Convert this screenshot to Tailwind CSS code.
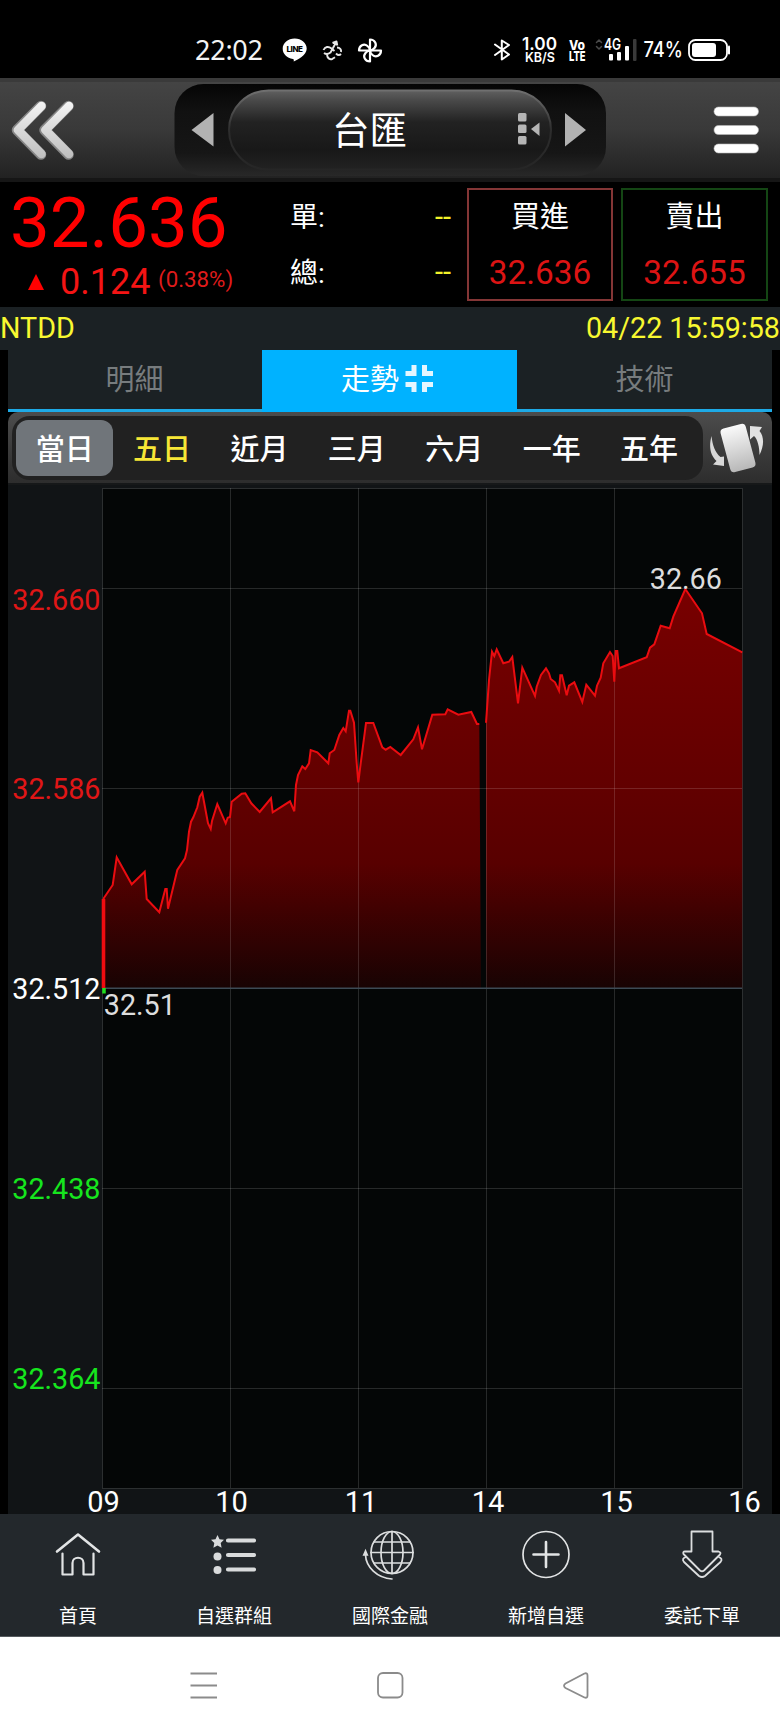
<!DOCTYPE html>
<html lang="zh-Hant">
<head>
<meta charset="utf-8">
<meta name="viewport" content="width=device-width, initial-scale=1">
<title>台匯</title>
<script src="https://cdn.jsdelivr.net/npm/@tailwindcss/browser@4"></script>
</head>
<body class="w-[780px] h-[1733px] bg-black overflow-hidden flex flex-col font-['Roboto','Noto_Sans_CJK_TC',sans-serif] text-white">

<!-- Status bar -->
<div class="h-[78px] shrink-0 bg-black">
<svg class="block" width="780" height="78" viewBox="0 0 780 78" fill="none" stroke-linecap="round" stroke-linejoin="round">
  <text x="195" y="59.500" font-family="Noto Sans" font-size="27" textLength="68" fill="#f4f4f4">22:02</text>
  <path d="M294.700 38.500c-6.700 0-12 4.500-12 10.200 0 5.200 4.400 9.500 10.200 10.200 1.200.2.900 1.300.8 2.600 3.500-1.600 13-6.500 13-12.800 0-5.700-5.300-10.200-12-10.200z" fill="#fff"/>
  <text x="286.500" y="52" font-family="Inter" font-weight="800" font-size="8" textLength="16.500" fill="#000">LINE</text>
  <g stroke="#e8e8e8" stroke-width="1.900" stroke-linecap="butt">
    <path d="M323.500 50c1.500-3.500 5-4 8-1.500l3 2.500M324 53c2 1.500 4.500 1 6.500-.5l5.500-10M332.500 43l4-1.500.8 4M337 47.500c3 0 4.500 2 4 4.500M341 54c-1.500 1.500-3.500 1-5-.5M327 55c.5 3.500 3 5 5.500 3.800l2.500-1.600"/>
  </g>
  <g stroke="#fff" stroke-width="2.200">
    <path d="M370 50.500V39.500c5 0 7.500 5 4.500 8.500-1.200 1.500-2.500 2.500-4.500 2.500z"/>
    <path d="M370 50.500V39.500c5 0 7.500 5 4.500 8.500-1.200 1.500-2.500 2.500-4.500 2.500z" transform="rotate(90 370 50.500)"/>
    <path d="M370 50.500V39.500c5 0 7.500 5 4.500 8.500-1.200 1.500-2.500 2.500-4.500 2.500z" transform="rotate(180 370 50.500)"/>
    <path d="M370 50.500V39.500c5 0 7.500 5 4.500 8.500-1.200 1.500-2.500 2.500-4.500 2.500z" transform="rotate(270 370 50.500)"/>
  </g>
  <path d="M495 44.500l14 10-7.200 5V40.500l7.200 4.500-14 10" stroke="#fff" stroke-width="2"/>
  <g fill="#fff" font-family="Inter">
    <text x="522" y="50" font-size="17.500" font-weight="600" textLength="35" lengthAdjust="spacingAndGlyphs">1.00</text>
    <text x="525" y="62" font-size="13.500" font-weight="600" textLength="30" lengthAdjust="spacingAndGlyphs">KB/S</text>
    <text x="569" y="49.500" font-size="13.500" font-weight="800" textLength="16" lengthAdjust="spacingAndGlyphs">Vo</text>
    <text x="569" y="61" font-size="13.500" font-weight="800" textLength="16.500" lengthAdjust="spacingAndGlyphs">LTE</text>
    <text x="604" y="50" font-size="15.500" font-weight="600" textLength="17" lengthAdjust="spacingAndGlyphs">4G</text>
    <text x="643.500" y="56.500" font-size="21" font-weight="500" textLength="39.500" lengthAdjust="spacingAndGlyphs">74%</text>
    <rect x="609" y="54" width="4" height="6.500" rx="1"/><rect x="617" y="52" width="4" height="8.500" rx="1"/><rect x="625" y="46" width="4" height="14.500" rx="1"/>
  </g>
  <rect x="633" y="39" width="3.500" height="22" rx="1" fill="#3a3a3a"/>
  <path d="M596.500 42.500l2.500-2.500 2.500 2.500M596.500 46.500l2.500 2.500 2.500-2.500" stroke="#4a4a4a" stroke-width="1.500"/>
  <rect x="689" y="40" width="38" height="20" rx="6.500" stroke="#fff" stroke-width="1.800"/>
  <rect x="692" y="43" width="24" height="14" rx="3" fill="#fff"/>
  <path d="M729 46.500v7" stroke="#fff" stroke-width="2"/>
</svg>
</div>

<!-- Title bar -->
<header class="h-[104px] shrink-0 bg-linear-to-b from-[#444444] via-[#393939] to-[#222222] border-t-4 border-t-[#3a3a3a] border-b-4 border-b-[#161616]">
<svg class="block -mt-1" width="780" height="104" viewBox="0 78 780 104">
  <defs>
    <linearGradient id="metal" x1="0" y1="0" x2="0" y2="1"><stop offset="0" stop-color="#fafafa"/><stop offset="1" stop-color="#b8b8b8"/></linearGradient>
    <linearGradient id="chev" gradientUnits="userSpaceOnUse" x1="0" y1="100" x2="0" y2="160"><stop offset="0" stop-color="#f6f6f6"/><stop offset="1" stop-color="#bcbcbc"/></linearGradient>
    <linearGradient id="well" x1="0" y1="0" x2="0" y2="1"><stop offset="0" stop-color="#050505"/><stop offset=".3" stop-color="#111"/><stop offset=".75" stop-color="#161616"/><stop offset="1" stop-color="#282828"/></linearGradient>
    <linearGradient id="pill" x1="0" y1="0" x2="0" y2="1"><stop offset="0" stop-color="#606060"/><stop offset=".12" stop-color="#4a4a4a"/><stop offset=".4" stop-color="#222"/><stop offset=".75" stop-color="#181818"/><stop offset="1" stop-color="#222"/></linearGradient>
    <linearGradient id="rim" x1="0" y1="0" x2="0" y2="1"><stop offset="0" stop-color="#707070"/><stop offset=".5" stop-color="#2d2d2d"/><stop offset="1" stop-color="#262626"/></linearGradient>
  </defs>
  <g fill="none" stroke-linecap="round" stroke-linejoin="round">
    <path d="M41 106L17 130 41 154.500M68.500 106L44.500 130 68.500 154.500" stroke="#858585" stroke-width="10.500"/>
    <path d="M41.500 106L18 130 41.500 154M69 106L45.500 130 69 154" stroke="url(#chev)" stroke-width="8.500"/>
  </g>
  <rect x="174.500" y="84" width="431.500" height="92" rx="29" fill="url(#well)"/>
  <path d="M191.500 130L213.500 113v33.500zM586 130l-21-17v33.500z" fill="#b2b2b2"/>
  <rect x="229" y="90.500" width="322" height="79" rx="39.500" fill="url(#pill)" stroke="url(#rim)" stroke-width="2"/>
  <text x="332" y="144" font-family="Noto Sans CJK TC" font-size="37.500" fill="#fff">台匯</text>
  <g fill="#b5b5b5"><rect x="518" y="113" width="8.500" height="8.500" rx="1.500"/><rect x="518" y="124.500" width="8.500" height="8.500" rx="1.500"/><rect x="518" y="136" width="8.500" height="8.500" rx="1.500"/><path d="M531 129l8.500-6.500v13.500z"/></g>
  <g fill="#fff" stroke="#bbb" stroke-width=".6"><rect x="714" y="107" width="44.500" height="9" rx="4.500"/><rect x="714" y="125.500" width="44.500" height="9" rx="4.500"/><rect x="714" y="144" width="44.500" height="9" rx="4.500"/></g>
</svg>
</header>

<!-- Quote summary -->
<section class="h-[125px] shrink-0 flex bg-black">
  <div class="w-[290px] flex flex-col text-[#ff0000]">
    <div class="pl-[10px] pt-[3px] h-[76px] text-[70.800px] leading-[76px] whitespace-nowrap">32.636</div>
    <div class="flex items-center h-[44px] pl-[28px] text-[#f41414] whitespace-nowrap">
      <svg class="mt-[3px] w-4 h-4 shrink-0" viewBox="0 0 16 16"><path d="M8 0l8 16H0z" fill="#ff0000"/></svg>
      <span class="ml-[16px] mt-[4px] w-[98px] text-[36px]">0.124</span>
      <span class="text-[22.300px] text-[#df1b1b]">(0.38%)</span>
    </div>
  </div>
  <div class="w-[163px] flex flex-col pt-[8px] text-[29px] leading-[56px]">
    <div class="flex justify-between"><span class="text-[28px]">單:</span><span class="text-[#f2f22a] pr-[2px] -mt-px">--</span></div>
    <div class="flex justify-between"><span class="text-[28px]">總:</span><span class="text-[#f2f22a] pr-[2px] -mt-[2px]">--</span></div>
  </div>
  <div class="flex gap-2 pt-[6px] pl-[14px]">
    <div class="w-[146px] h-[113px] border-2 border-[#843636] flex flex-col items-center text-[29px] leading-[55px]"><span>買進</span><span class="text-[33.300px] text-[#dc1414]">32.636</span></div>
    <div class="w-[147px] h-[113px] border-2 border-[#144614] flex flex-col items-center text-[29px] leading-[55px]"><span>賣出</span><span class="text-[33.300px] text-[#dc1414]">32.655</span></div>
  </div>
</section>

<!-- Source and timestamp -->
<div class="h-[43px] shrink-0 bg-[#1b2124] flex justify-between text-[#f8f830] text-[28.700px] leading-[42px] whitespace-nowrap">
  <span>NTDD</span><span>04/22 15:59:58</span>
</div>

<!-- View tabs -->
<nav class="mx-2 h-[62px] shrink-0 grid grid-cols-[254px_255px_255px] bg-[#1b2124] text-[#777c7e] text-[29px] leading-[61px] text-center border-b-[3px] border-[#1eaae6]">
  <span class="pr-px">明細</span>
  <span class="bg-[#00b2ff] text-white h-[62px] flex justify-center items-start gap-[6px] pr-[4px]">走勢<svg class="mt-[14px]" width="29" height="29" viewBox="0 0 29 29" fill="none" stroke="#e4f6ff" stroke-width="5"><path d="M9 1v8.500H.5M19.500 1v8.500H28M9 28v-7.500H.5M19.500 28v-7.500H28"/></svg></span>
  <span>技術</span>
</nav>

<!-- Time range -->
<div class="mx-2 h-[73px] shrink-0 rounded-t-[10px] bg-linear-to-b from-[#4c4c4c] to-[#2d2d2d] flex border-b-2 border-[#161819]">
  <div class="ml-[4px] mt-[4px] w-[691px] h-[64px] rounded-[18px] bg-[#212121] flex p-1 text-[29px] font-medium leading-[61px] text-center [&>span]:w-[97.400px]">
    <span class="rounded-[12px] bg-[#70757a] h-[56px]">當日</span>
    <span class="text-[#f7e636]">五日</span>
    <span>近月</span><span>三月</span><span>六月</span><span>一年</span><span>五年</span>
  </div>
  <svg class="ml-[7px] mt-[9px]" width="56" height="54" viewBox="710 421 56 54">
    <rect x="-13" y="-22.500" width="26" height="45" rx="4" transform="translate(738 448) rotate(-15)" fill="url(#metal)"/>
    <path d="M724 456.500v9.500l-11-1.500 3.500-3.500c-6-6-8-14-5-25 1 9 3.500 16.500 9 21z" fill="#d8d8d8"/>
    <path d="M750 426l12 1-2.500 4c5 6 4.500 15 0 24 0-8-2-16-5.500-19l-4 3.500z" fill="#e2e2e2"/>
  </svg>
</div>

<!-- Intraday chart -->
<main class="mx-2 h-[1029px] shrink-0">
<svg class="block overflow-visible" width="764" height="1029" viewBox="8 485 764 1029" font-family="Roboto" font-size="28.700">
  <defs>
    <linearGradient id="area" gradientUnits="userSpaceOnUse" x1="0" y1="588" x2="0" y2="988">
      <stop offset="0" stop-color="#780000"/><stop offset=".5" stop-color="#620000"/><stop offset=".69" stop-color="#580000"/><stop offset="1" stop-color="#180303"/>
    </linearGradient>
    <path id="am" d="M103.700 987.300V898.300L112.700 885 116.700 857.300 131.700 884.300 144.700 871.700 146.700 899 159.300 912.300 165.300 889 166.700 889 168 908.700 177.300 870 185 858.300 187 850 189 831.700 191 821.700 193.300 817.300 197.300 807.300 199.700 796.700 202.300 792.700 208 823.300 210.700 829 212 821 217.300 804 225.700 823.300 227.700 817.700 230 817 231.700 801.700 241.700 793.700 245.300 793.300 251.300 803.300 259.700 812 271 798.300 272.700 812.300 290 801.300 294.300 811.300 296 785 298 775 302.300 766.300 305.300 769 309 763.300 310.700 750 317.300 752.300 328.300 763.300 329.700 753.300 334.300 750 339.300 735 343.300 728 345.700 731.300 349 710.700 350.300 710.700 354 722.700 356.700 763.300 358.300 782.300 360.700 763.300 366 723 373.300 723 382.300 747.300 385.700 749.700 390.300 747 400.700 755 413.300 739.300 418 727.300 422 749.300 432.300 714.700 445.300 714.300 447.700 709.300 458.300 714.700 471.300 712 477 724 479.300 724"/>
    <path id="pm" d="M486 722.700L486.700 713.300 489 680 492 651.700 494.300 656 496.700 649.300 503.300 663.300 509 661.700 512.300 657 514.700 676.700 518 703.300 522.300 667.700 535 696 536.700 686.700 541 675 546 668.300 549 673.300 550.700 679 555 682.300 559 690.700 560.300 675.300 562 675.300 566.700 695.300 569 685.700 574.300 682.300 582.300 702 586.300 684.700 595 695.700 597 685.700 600.700 677.700 603.300 663.300 610 652 612.700 656 614.300 681.700 615.700 651 617.300 651 619 668.300 646.700 657.300 650 647.700 654.300 644.300 660.700 625.700 669.700 628.300 673.300 616.700 685.300 589 702 613.300 706.700 634 742.300 652.300"/>
  </defs>
  <rect x="8" y="485" width="764" height="1029" fill="#111416"/>
  <rect x="102.500" y="488.500" width="640" height="1000" fill="#040606"/>
  <path fill="url(#area)" d="M103.700 988V898.300L112.700 885 116.700 857.300 131.700 884.300 144.700 871.700 146.700 899 159.300 912.300 165.300 889 166.700 889 168 908.700 177.300 870 185 858.300 187 850 189 831.700 191 821.700 193.300 817.300 197.300 807.300 199.700 796.700 202.300 792.700 208 823.300 210.700 829 212 821 217.300 804 225.700 823.300 227.700 817.700 230 817 231.700 801.700 241.700 793.700 245.300 793.300 251.300 803.300 259.700 812 271 798.300 272.700 812.300 290 801.300 294.300 811.300 296 785 298 775 302.300 766.300 305.300 769 309 763.300 310.700 750 317.300 752.300 328.300 763.300 329.700 753.300 334.300 750 339.300 735 343.300 728 345.700 731.300 349 710.700 350.300 710.700 354 722.700 356.700 763.300 358.300 782.300 360.700 763.300 366 723 373.300 723 382.300 747.300 385.700 749.700 390.300 747 400.700 755 413.300 739.300 418 727.300 422 749.300 432.300 714.700 445.300 714.300 447.700 709.300 458.300 714.700 471.300 712 477 724 479.300 724 481 988z"/>
  <path fill="url(#area)" d="M486 988V722.700L486.700 713.300 489 680 492 651.700 494.300 656 496.700 649.300 503.300 663.300 509 661.700 512.300 657 514.700 676.700 518 703.300 522.300 667.700 535 696 536.700 686.700 541 675 546 668.300 549 673.300 550.700 679 555 682.300 559 690.700 560.300 675.300 562 675.300 566.700 695.300 569 685.700 574.300 682.300 582.300 702 586.300 684.700 595 695.700 597 685.700 600.700 677.700 603.300 663.300 610 652 612.700 656 614.300 681.700 615.700 651 617.300 651 619 668.300 646.700 657.300 650 647.700 654.300 644.300 660.700 625.700 669.700 628.300 673.300 616.700 685.300 589 702 613.300 706.700 634 742.300 652.300V988z"/>
  <g stroke="#ffffff" stroke-opacity=".14" fill="none">
    <path d="M102.500 488.500H742.500V1488.500H102.500zM230.500 488V1488M358.500 488V1488M486.500 488V1488M614.500 488V1488M102 588.500H742M102 788.500H742M102 1188.500H742M102 1388.500H742"/>
  </g>
  <path d="M102 988.300H742" stroke="#3d4a55" stroke-width="1.500"/>
  <use href="#am" fill="none" stroke="#ea0c10" stroke-width="2"/>
  <use href="#pm" fill="none" stroke="#ea0c10" stroke-width="2"/>
  <path d="M103.500 899V988" stroke="#f00c10" stroke-width="3.600"/>
  <path d="M104 988v5.500" stroke="#20e020" stroke-width="3.500"/>
  <g text-anchor="end">
    <text x="100.500" y="609.500" fill="#e01616">32.660</text>
    <text x="100.500" y="798.500" fill="#e01616">32.586</text>
    <text x="100.500" y="998.500" fill="#fff">32.512</text>
    <text x="100.500" y="1198.500" fill="#16e61e">32.438</text>
    <text x="100.500" y="1388.500" fill="#16e61e">32.364</text>
  </g>
  <text x="649.800" y="588.500" fill="#ddd">32.66</text>
  <text x="103.800" y="1015" fill="#ddd">32.51</text>
  <g text-anchor="middle" fill="#fff" font-size="29">
    <text x="103.500" y="1512">09</text><text x="231.500" y="1512">10</text><text x="361" y="1512">11</text><text x="488" y="1512">14</text><text x="616.500" y="1512">15</text><text x="744.500" y="1512">16</text>
  </g>
</svg>
</main>

<!-- App navigation -->
<nav class="h-[123px] shrink-0 bg-[#23282c] border-b border-[#555a5e] grid grid-cols-5 text-[19px] font-['Noto_Sans_CJK_TC',sans-serif] [&>a]:flex [&>a]:flex-col [&>a]:items-center [&_svg]:mt-[14px] [&_span]:mt-[17px] [&_span]:leading-[28px]">
  <a><svg width="56" height="56" viewBox="0 0 56 56" fill="none" stroke="#e2e4e5" stroke-width="2.200" stroke-linejoin="round" stroke-linecap="round"><path d="M7 23.500L28 6.500 49 23.500" stroke-width="2.600"/><path d="M12.500 25.500v21h10V35c0-7 11-7 11 0v11.500h10v-21"/></svg><span>首頁</span></a>
  <a><svg width="56" height="56" viewBox="0 0 56 56" fill="#d9dbdc"><path d="M11.500 7l2 4.200 4.500.6-3.300 3.300.9 4.700-4.100-2.300-4.100 2.300.9-4.700L5 11.800l4.500-.6z"/><circle cx="11.500" cy="28.500" r="4"/><circle cx="11.500" cy="42" r="4"/><g stroke="#d9dbdc" stroke-width="4.200" stroke-linecap="round"><path d="M22 12.500h26M22 27h26M22 41.500h26"/></g></svg><span>自選群組</span></a>
  <a><svg width="56" height="56" viewBox="0 0 56 56" fill="none" stroke="#dcdedf" stroke-width="1.700"><circle cx="30" cy="24.500" r="21"/><ellipse cx="30" cy="24.500" rx="11" ry="21"/><path d="M30 3.500v42M9 24.500h42M12 14h36M12 35h36M30 51C15 50 4 39 3.500 27" stroke-linecap="round"/><path d="M3.500 23l-1.700 4h3.400z" fill="#dcdedf"/></svg><span>國際金融</span></a>
  <a><svg width="56" height="56" viewBox="0 0 56 56" fill="none" stroke="#e2e4e5" stroke-linecap="round"><circle cx="28" cy="26.500" r="23" stroke-width="1.700"/><path d="M28 14v25M15.500 26.500h25" stroke-width="2.600"/></svg><span>新增自選</span></a>
  <a><svg width="56" height="56" viewBox="0 0 56 56" fill="none" stroke="#dcdedf" stroke-width="1.800" stroke-linejoin="round"><path d="M17.500 3.500h21V23.500h6q3 1 1.500 3L30 42.500q-2 1.500-4 0L9.500 26q-1-2.500 1.500-2.500h6.500z"/><path d="M12 29c-3 1-4 2.500-2 5l15 14q3 2 6 0l15.500-14c2-2.500 1-4-2-5"/></svg><span>委託下單</span></a>
</nav>

<!-- System navigation -->
<footer class="h-[96px] shrink-0 bg-white">
<svg class="block" width="780" height="96" viewBox="0 1637 780 96" fill="none" stroke="#8b8b8b" stroke-width="1.800" stroke-linejoin="round">
  <path d="M190.500 1673.500h26.500M190.500 1685.500h26.500M190.500 1697.500h26.500"/>
  <rect x="378" y="1673" width="24.500" height="24.500" rx="5"/>
  <path d="M565.500 1683.500L584.500 1673.500q3-1 3 2v20q0 3-3 2L565.500 1688q-3-2.200 0-4.500z"/>
</svg>
</footer>
</body>
</html>
